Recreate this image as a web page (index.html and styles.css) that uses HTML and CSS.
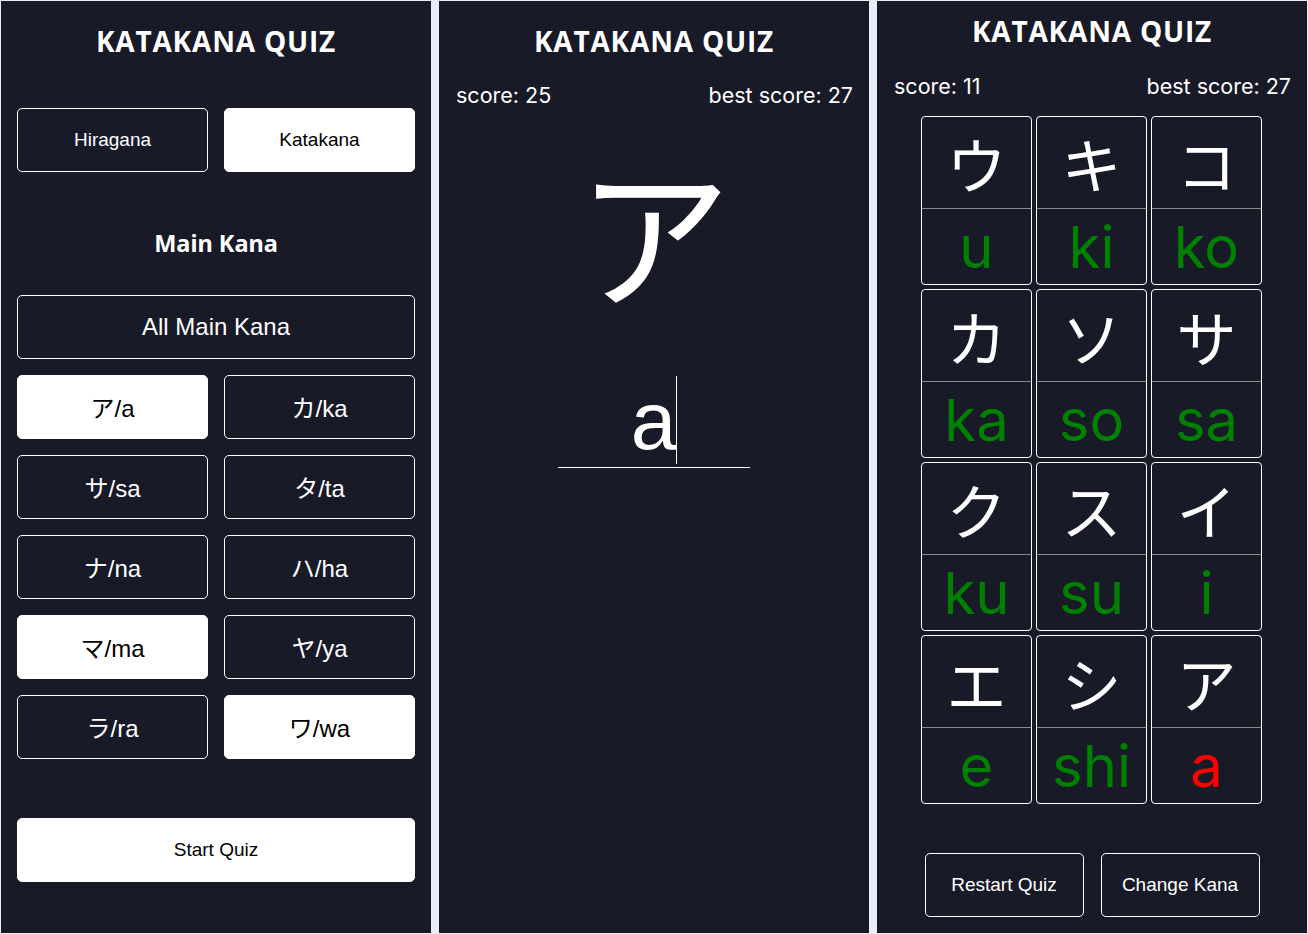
FILE: index.html
```html
<!DOCTYPE html>
<html lang="ja">
<head>
<meta charset="utf-8">
<title>Katakana Quiz</title>
<link rel="stylesheet" href="styles.css">
</head>
<body>
<div class="screens">
  <section class="panel panel-setup">
    <h1 class="title">KATAKANA QUIZ</h1>
    <div class="pair-row">
      <button class="btn">Hiragana</button>
      <button class="btn btn-on">Katakana</button>
    </div>
    <h2 class="subtitle">Main Kana</h2>
    <button class="btn btn-wide btn-big">All Main Kana</button>
    <div class="kana-grid">
      <button class="btn btn-big btn-on">ア/a</button>
      <button class="btn btn-big">カ/ka</button>
      <button class="btn btn-big">サ/sa</button>
      <button class="btn btn-big">タ/ta</button>
      <button class="btn btn-big">ナ/na</button>
      <button class="btn btn-big">ハ/ha</button>
      <button class="btn btn-big btn-on">マ/ma</button>
      <button class="btn btn-big">ヤ/ya</button>
      <button class="btn btn-big">ラ/ra</button>
      <button class="btn btn-big btn-on">ワ/wa</button>
    </div>
    <button class="btn btn-wide btn-on btn-start">Start Quiz</button>
  </section>

  <section class="panel panel-quiz">
    <h1 class="title">KATAKANA QUIZ</h1>
    <div class="score-row">
      <span>score: 25</span>
      <span>best score: 27</span>
    </div>
    <div class="big-kana">ア</div>
    <div class="answer"><span class="answer-text">a</span><span class="caret"></span></div>
  </section>

  <section class="panel panel-result">
    <h1 class="title">KATAKANA QUIZ</h1>
    <div class="score-row">
      <span>score: 11</span>
      <span>best score: 27</span>
    </div>
    <div class="result-grid">
      <div class="cell"><div class="cell-kana">ウ</div><div class="cell-romaji ok">u</div></div>
      <div class="cell"><div class="cell-kana">キ</div><div class="cell-romaji ok">ki</div></div>
      <div class="cell"><div class="cell-kana">コ</div><div class="cell-romaji ok">ko</div></div>
      <div class="cell"><div class="cell-kana">カ</div><div class="cell-romaji ok">ka</div></div>
      <div class="cell"><div class="cell-kana">ソ</div><div class="cell-romaji ok">so</div></div>
      <div class="cell"><div class="cell-kana">サ</div><div class="cell-romaji ok">sa</div></div>
      <div class="cell"><div class="cell-kana">ク</div><div class="cell-romaji ok">ku</div></div>
      <div class="cell"><div class="cell-kana">ス</div><div class="cell-romaji ok">su</div></div>
      <div class="cell"><div class="cell-kana">イ</div><div class="cell-romaji ok">i</div></div>
      <div class="cell"><div class="cell-kana">エ</div><div class="cell-romaji ok">e</div></div>
      <div class="cell"><div class="cell-kana">シ</div><div class="cell-romaji ok">shi</div></div>
      <div class="cell"><div class="cell-kana">ア</div><div class="cell-romaji bad">a</div></div>
    </div>
    <div class="result-actions">
      <button class="btn btn-action">Restart Quiz</button>
      <button class="btn btn-action">Change Kana</button>
    </div>
  </section>
</div>
</body>
</html>
```

FILE: styles.css
```css
* { box-sizing: border-box; }

html, body {
  margin: 0;
  padding: 0;
  background: #e9eef6;
}

body {
  padding: 1px;
  font-family: "Liberation Sans", Arial, "Noto Sans CJK JP", sans-serif;
}

.screens {
  display: flex;
  gap: 8px;
  height: 932px;
}

.panel {
  width: 430px;
  height: 932px;
  background: #181a27;
  color: #ffffff;
  padding: 23px 16px 0;
  display: flex;
  flex-direction: column;
  overflow: hidden;
}

.title {
  margin: 0;
  font-family: "Open Sans", "Noto Sans", sans-serif;
  font-weight: 700;
  font-size: 28px;
  line-height: 34px;
  letter-spacing: 0.8px;
  text-align: center;
}

.btn {
  font-family: "Liberation Sans", Arial, "Noto Sans CJK JP", sans-serif;
  font-size: 19px;
  color: #ffffff;
  background: #181a27;
  border: 1px solid #ffffff;
  border-radius: 5px;
  height: 64px;
  padding: 0 0 1px;
  cursor: pointer;
}

.btn-on {
  background: #ffffff;
  color: #000000;
}

.btn-big { font-size: 24px; }

.pair-row {
  margin-top: 50px;
  display: grid;
  grid-template-columns: 1fr 1fr;
  gap: 16px;
}

.subtitle {
  margin: 57px 0 0;
  font-family: "Noto Sans", "Open Sans", sans-serif;
  font-weight: 700;
  font-size: 23.5px;
  line-height: 28px;
  text-align: center;
}

.btn-wide { width: 100%; }

.panel-setup .btn-wide.btn-big { margin-top: 38px; }

.kana-grid {
  margin-top: 16px;
  display: grid;
  grid-template-columns: 1fr 1fr;
  gap: 16px;
}

.btn-start { margin-top: 59px; }

/* quiz panel */
.score-row {
  display: flex;
  justify-content: space-between;
  font-family: "Inter", "Open Sans", sans-serif;
  font-size: 21.5px;
  line-height: 24px;
  padding: 0 0 0 1px;
}

.panel-quiz .score-row { margin-top: 25px; }

.big-kana {
  margin-top: 38px;
  text-align: center;
  font-family: "Noto Sans CJK JP", sans-serif;
  font-size: 154px;
  line-height: 170px;
}

.answer {
  align-self: center;
  width: 192px;
  margin-top: 61px;
  border-bottom: 1px solid #ffffff;
  height: 92px;
  display: flex;
  justify-content: center;
  align-items: flex-end;
  font-family: "Liberation Sans", Arial, sans-serif;
  font-size: 82px;
  line-height: 92px;
}

.answer-text { display: inline-block; }

.caret {
  display: inline-block;
  width: 1px;
  height: 88px;
  background: #ffffff;
  margin-bottom: 3px;
}

/* result panel */
.panel-result { padding-top: 13px; }

.panel-result .score-row { margin-top: 26px; }

.result-grid {
  align-self: center;
  margin-top: 18px;
  margin-right: 1px;
  display: grid;
  grid-template-columns: repeat(3, 111px);
  grid-auto-rows: 169px;
  gap: 4px;
}

.cell {
  border: 1px solid #ffffff;
  border-radius: 4px;
  display: flex;
  flex-direction: column;
}

.cell-kana {
  height: 92px;
  border-bottom: 1px solid #8a8a8a;
  display: flex;
  align-items: center;
  justify-content: center;
  font-family: "Noto Sans CJK JP", sans-serif;
  font-size: 60px;
  line-height: 1;
  color: #ffffff;
}

.cell-romaji {
  flex: 1;
  display: flex;
  align-items: center;
  justify-content: center;
  font-family: "Inter", "Roboto", sans-serif;
  font-weight: 400;
  font-size: 58px;
  line-height: 1;
}

.ok { color: #008000; }
.bad { color: #ff0000; }

.result-actions {
  align-self: center;
  margin-top: 49px;
  display: flex;
  gap: 17px;
}

.btn-action {
  width: 159px;
  height: 64px;
}
```
